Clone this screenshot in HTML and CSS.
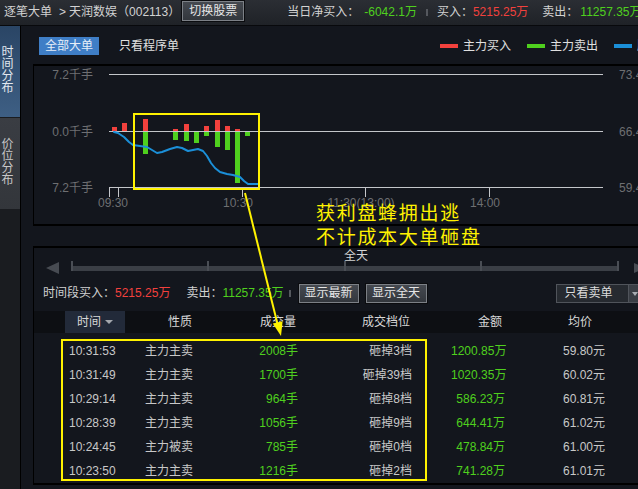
FILE: index.html
```html
<!DOCTYPE html>
<html lang="zh-CN">
<head>
<meta charset="utf-8">
<title>逐笔大单</title>
<link rel="stylesheet" href="styles.css">
</head>
<body>
<div class="app">
  <header class="topbar">
    <span class="crumb">逐笔大单</span>
    <span class="gt">&gt;</span>
    <span class="crumb crumb-stock">天润数娱</span>
    <span class="code">（002113）</span>
    <button class="btn btn-switch">切换股票</button>
    <div class="summary">
      <span class="lbl">当日净买入：</span>
      <span class="val green">-6042.1万</span>
      <span class="sep"></span>
      <span class="lbl">买入：</span>
      <span class="val red">5215.25万</span>
      <span class="lbl lbl-sell">卖出：</span>
      <span class="val val-sell green">11257.35万</span>
    </div>
  </header>

  <div class="main">
    <nav class="sidebar">
      <div class="tab active"><span class="tab-label">时间分布</span></div>
      <div class="tab"><span class="tab-label">价位分布</span></div>
    </nav>

    <section class="content">
      <div class="filterbar">
        <button class="seg active">全部大单</button>
        <span class="seg-text">只看程序单</span>
        <div class="legend">
          <span class="sw sw-red"></span><span class="lg">主力买入</span>
          <span class="sw sw-green"></span><span class="lg">主力卖出</span>
          <span class="sw sw-blue"></span><span class="lg">股价</span>
        </div>
      </div>

      <div class="panel chart">
        <svg class="chart-svg" width="604" height="158" viewBox="34 66 604 158">
          <g class="grid">
            <line x1="109" y1="74.5" x2="603" y2="74.5"/>
            <line x1="109" y1="131.5" x2="603" y2="131.5"/>
            <line x1="109" y1="187.5" x2="603" y2="187.5"/>
            <line x1="109.5" y1="187" x2="109.5" y2="197"/>
            <line x1="118.5" y1="187" x2="118.5" y2="197"/>
            <line x1="242.5" y1="187" x2="242.5" y2="197"/>
            <line x1="365.5" y1="187" x2="365.5" y2="197"/>
            <line x1="489.5" y1="187" x2="489.5" y2="197"/>
          </g>
          <g class="axis">
            <text x="93" y="79" text-anchor="end">7.2千手</text>
            <text x="93" y="136" text-anchor="end">0.0千手</text>
            <text x="93" y="192" text-anchor="end">7.2千手</text>
            <text x="619" y="79">73.46</text>
            <text x="619" y="136">66.46</text>
            <text x="619" y="192">59.46</text>
            <text x="113" y="207" text-anchor="middle">09:30</text>
            <text x="238" y="207" text-anchor="middle">10:30</text>
            <text x="361" y="207" text-anchor="middle">11:30(13:00)</text>
            <text x="485" y="207" text-anchor="middle">14:00</text>
          </g>
          <g class="buy">
            <rect x="112" y="127" width="5" height="4"/>
            <rect x="122" y="123" width="5" height="8"/>
            <rect x="143" y="119" width="5" height="12"/>
            <rect x="173" y="129" width="5" height="2"/>
            <rect x="184" y="124" width="5" height="7"/>
            <rect x="204" y="126" width="5" height="5"/>
            <rect x="215" y="120" width="5" height="11"/>
            <rect x="225" y="126" width="5" height="5"/>
            <rect x="235" y="129" width="5" height="2"/>
          </g>
          <g class="sell">
            <rect x="143" y="132" width="5" height="22"/>
            <rect x="173" y="132" width="5" height="8"/>
            <rect x="184" y="132" width="5" height="9"/>
            <rect x="194" y="132" width="5" height="11"/>
            <rect x="204" y="132" width="5" height="4"/>
            <rect x="215" y="132" width="5" height="15"/>
            <rect x="225" y="132" width="5" height="18"/>
            <rect x="235" y="132" width="5" height="51"/>
            <rect x="245" y="132" width="5" height="4"/>
          </g>
          <polyline class="price" points="114,132 118,133 124,137 129,142 133,145 140,146 147,147 152,150 157,153 162,152 170,149 177,147 182,148 188,151 193,150 198,149 203,151 207,156 211,163 215,168 220,172 227,174 233,175 240,177 244,181 248,184 258,184"/>
        </svg>
      </div>

      <div class="panel detail">
        <svg class="scroll-svg" width="604" height="32" viewBox="34 248 604 32">
          <polygon class="arrow-btn" points="46,268 59,262 59,274"/>
          <rect class="track" x="71" y="266" width="548" height="5"/>
          <rect class="tick" x="71" y="261" width="2" height="10"/>
          <rect class="tick" x="207" y="261" width="2" height="10"/>
          <rect class="tick" x="344" y="261" width="2" height="10"/>
          <rect class="tick" x="480" y="261" width="2" height="10"/>
          <rect class="tick" x="617" y="261" width="2" height="10"/>
          <text class="scroll-label" x="356" y="259.5" text-anchor="middle">全天</text>
          <polygon class="arrow-btn" points="634,263 645,268 634,273"/>
        </svg>

        <div class="inforow">
          <span class="lbl">时间段买入：</span>
          <span class="val red">5215.25万</span>
          <span class="lbl lbl-sell2">卖出：</span>
          <span class="val green">11257.35万</span>
          <span class="sep sep2"></span>
          <button class="btn btn-act">显示最新</button>
          <button class="btn btn-act btn-all">显示全天</button>
          <div class="select">
            <span class="select-text">只看卖单</span>
            <span class="select-arrow"></span>
          </div>
        </div>

        <div class="thead">
          <div class="th th-sort">时间<span class="caret"></span></div>
          <div class="th">性质</div>
          <div class="th">成交量</div>
          <div class="th">成交档位</div>
          <div class="th">金额</div>
          <div class="th">均价</div>
        </div>

        <div class="tbody">
          <div class="tr"><span class="c1">10:31:53</span><span class="c2">主力主卖</span><span class="c3 green">2008手</span><span class="c4">砸掉3档</span><span class="c5 green">1200.85万</span><span class="c6">59.80元</span></div>
          <div class="tr"><span class="c1">10:31:49</span><span class="c2">主力主卖</span><span class="c3 green">1700手</span><span class="c4">砸掉39档</span><span class="c5 green">1020.35万</span><span class="c6">60.02元</span></div>
          <div class="tr"><span class="c1">10:29:14</span><span class="c2">主力主卖</span><span class="c3 green">964手</span><span class="c4">砸掉8档</span><span class="c5 green">586.23万</span><span class="c6">60.81元</span></div>
          <div class="tr"><span class="c1">10:28:39</span><span class="c2">主力主卖</span><span class="c3 green">1056手</span><span class="c4">砸掉9档</span><span class="c5 green">644.41万</span><span class="c6">61.02元</span></div>
          <div class="tr"><span class="c1">10:24:45</span><span class="c2">主力被卖</span><span class="c3 green">785手</span><span class="c4">砸掉0档</span><span class="c5 green">478.84万</span><span class="c6">61.00元</span></div>
          <div class="tr"><span class="c1">10:23:50</span><span class="c2">主力主卖</span><span class="c3 green">1216手</span><span class="c4">砸掉2档</span><span class="c5 green">741.28万</span><span class="c6">61.01元</span></div>
        </div>
      </div>
    </section>
  </div>

  <svg class="overlay" width="638" height="489" viewBox="0 0 638 489">
    <rect class="mark" x="134" y="114" width="125" height="75"/>
    <rect class="mark" x="62" y="340" width="364" height="140"/>
    <line class="mark-line" x1="245" y1="193" x2="278" y2="326"/>
    <polygon class="mark-head" points="281,336 272.8,323.6 282.6,321.2"/>
  </svg>
  <div class="note">获利盘蜂拥出逃<br>不计成本大单砸盘</div>
</div>
</body>
</html>
```

FILE: styles.css
```css
* { box-sizing: border-box; margin: 0; padding: 0; }

html, body {
  width: 638px;
  height: 489px;
  overflow: hidden;
}

body {
  background: #13161d;
  color: #c8c8c8;
  font-family: "Liberation Sans", "Noto Sans CJK SC", sans-serif;
  font-size: 12px;
  line-height: 1;
}

.app {
  position: relative;
  width: 638px;
  height: 489px;
  overflow: hidden;
}

.red { color: #f2413d; }
.green { color: #4fd01e; }

/* ---------- top bar ---------- */
.topbar {
  height: 26px;
  display: flex;
  align-items: center;
  padding: 0 0 1px 4px;
  background: linear-gradient(#2b2e34, #1f2227);
  border-bottom: 1px solid #08090c;
  white-space: nowrap;
  color: #d2d2d2;
}

.gt { margin: 0 3px 0 7px; }

.btn {
  font: inherit;
  color: #e6e6e6;
  background: linear-gradient(#454950, #33373d);
  border: 1px solid #7c8086;
  box-shadow: 0 0 0 1px #0b0c0f;
  display: flex;
  align-items: center;
  justify-content: center;
  flex-shrink: 0;
}

.btn-switch {
  width: 62px;
  height: 20px;
  margin-left: 2px;
  margin-bottom: 2px;
}

.summary {
  display: flex;
  align-items: center;
  margin-left: 43px;
  white-space: nowrap;
}

.summary .val { margin-left: 5px; }
.summary .val.red { margin-left: 0; }
.summary .lbl-sell { margin-left: 14px; }
.summary .val-sell { margin-left: 2px; }

.sep {
  width: 2px;
  height: 7px;
  background: #55585e;
  margin: 0 9px;
  flex-shrink: 0;
}

/* ---------- main ---------- */
.main {
  display: flex;
  height: 463px;
}

.sidebar {
  width: 21px;
  flex-shrink: 0;
  background: #1a1c20;
  border-right: 1px solid #000;
  display: flex;
  flex-direction: column;
}

.tab {
  height: 91px;
  padding-top: 19px;
  background: linear-gradient(#3a3d43, #33363b);
  color: #c8c8c8;
}

.tab + .tab { margin-top: 1px; }

.tab.active {
  background: linear-gradient(#2a4565, #3e5f84);
  color: #e2e8ef;
}

.tab-label {
  display: block;
  writing-mode: vertical-rl;
  line-height: 12px;
  width: 12px;
}

.content {
  flex: 1;
  min-width: 0;
  padding-left: 12px;
  display: flex;
  flex-direction: column;
  overflow: hidden;
}

/* ---------- filter bar ---------- */
.filterbar {
  height: 38px;
  flex-shrink: 0;
  display: flex;
  align-items: center;
  padding: 2px 0 0 6px;
  white-space: nowrap;
  overflow: hidden;
}

.seg {
  font: inherit;
  width: 60px;
  height: 18px;
  flex-shrink: 0;
  border: none;
  background: #3f7ec6;
  color: #e6eef8;
}

.seg-text {
  margin-left: 20px;
  color: #e0e0e0;
  flex-shrink: 0;
}

.legend {
  display: flex;
  align-items: center;
  margin-left: 261px;
  flex-shrink: 0;
  color: #e0e0e0;
}

.sw {
  width: 18px;
  height: 4px;
  margin-right: 5px;
  flex-shrink: 0;
}

.sw-red { background: #f2413d; }
.sw-green { background: #4fd01e; }
.sw-blue { background: #1b8fd8; }

.lg { margin-right: 16px; flex-shrink: 0; }

/* ---------- panels ---------- */
.panel {
  flex-shrink: 0;
  border-left: 1px solid #000;
  border-top: 2px solid #000;
  border-bottom: 2px solid #000;
}

.chart { height: 162px; }

.chart-svg, .scroll-svg { display: block; }

.grid line { stroke: #c4c6ca; stroke-width: 1; }
.axis text { fill: #6e6f72; font-size: 12px; }
.buy rect { fill: #f2413d; }
.sell rect { fill: #4fd01e; }
.price {
  fill: none;
  stroke: #1b8fd8;
  stroke-width: 2;
  stroke-linejoin: round;
  stroke-linecap: round;
}

.detail {
  margin-top: 20px;
  height: 239px;
}

.arrow-btn { fill: #474b52; }
.track { fill: #3b3f46; }
.tick { fill: #4a4e55; }
.scroll-label { fill: #d4d4d4; font-size: 12px; }

/* info row */
.inforow {
  height: 20px;
  margin-top: 3px;
  display: flex;
  align-items: center;
  padding-left: 9px;
  white-space: nowrap;
}

.inforow .lbl { color: #d0d0d0; }
.lbl-sell2 { margin-left: 16px; }
.sep2 { margin: 0 8px 0 5px; }

.btn-act {
  width: 60px;
  height: 19px;
}

.btn-all {
  width: 61px;
  margin-left: 7px;
}

.select {
  margin-left: 129px;
  display: flex;
  height: 19px;
  flex-shrink: 0;
}

.select-text {
  width: 73px;
  height: 19px;
  display: flex;
  align-items: center;
  padding-left: 8px;
  background: #262a30;
  border: 1px solid #50545b;
  color: #dcdcdc;
}

.select-arrow {
  width: 12px;
  height: 19px;
  background: #3a3e45;
  border: 1px solid #50545b;
  border-left: none;
  position: relative;
}

.select-arrow::after {
  content: "";
  position: absolute;
  left: 3px;
  top: 7px;
  border-left: 3px solid transparent;
  border-right: 3px solid transparent;
  border-top: 4px solid #a8acb2;
}

/* table */
.thead, .tr {
  display: grid;
  grid-template-columns: 60px 110px 86px 130px 78px 102px;
  padding-left: 31px;
}

.thead {
  height: 22px;
  margin-top: 8px;
  background: #0d0f13;
  color: #d8d8d8;
}

.th {
  display: flex;
  align-items: center;
  justify-content: center;
}

.th-sort { background: #222a39; }

.caret {
  margin-left: 4px;
  border-left: 4px solid transparent;
  border-right: 4px solid transparent;
  border-top: 4px solid #a4a8ae;
}

.tbody { margin-top: 6px; }

.tr {
  height: 24px;
  align-items: center;
  white-space: nowrap;
}

.c1 { padding-left: 4px; }
.c2 { padding-left: 20px; }
.c3 { text-align: right; padding-right: 23px; }
.c4 { text-align: right; padding-right: 39px; }
.c5 { text-align: right; padding-right: 24px; }
.c6 { text-align: right; padding-right: 26px; }

/* ---------- annotations ---------- */
.overlay {
  position: absolute;
  left: 0;
  top: 0;
  pointer-events: none;
}

.mark {
  fill: none;
  stroke: #fff200;
  stroke-width: 2;
}

.mark-line {
  stroke: #fff200;
  stroke-width: 2;
}

.mark-head { fill: #fff200; }

.note {
  position: absolute;
  left: 316px;
  top: 200px;
  color: #fff200;
  font-family: "Noto Sans CJK SC", sans-serif;
  font-size: 19px;
  line-height: 24px;
  letter-spacing: 1.7px;
  white-space: nowrap;
}
```
